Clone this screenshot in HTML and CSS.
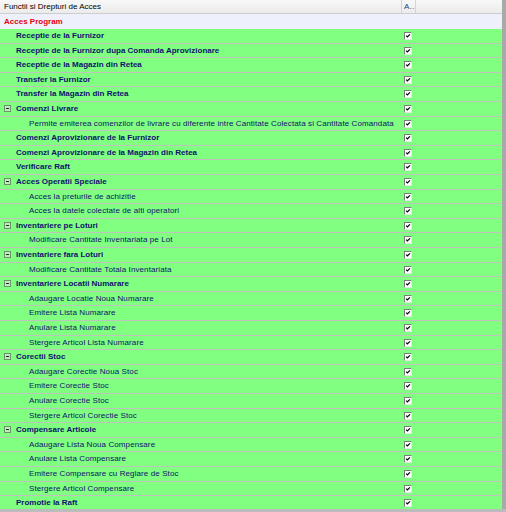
FILE: index.html
```html
<!DOCTYPE html>
<html lang="ro">
<head>
    <meta charset="UTF-8">
    <title>Functii si Drepturi de Acces</title>
    <link rel="stylesheet" href="styles.css">
</head>
<body>
    <svg class="defs" width="0" height="0">
        <symbol id="tick" viewBox="0 0 8 8">
            <path d="M1.5 3.5 L3.2 5.3 L6.6 1.8" fill="none" stroke="#000" stroke-width="1.6"/>
        </symbol>
    </svg>

    <div class="tree">
        <div class="head">
            <span class="col-name">Functii si Drepturi de Acces</span>
            <span class="col-chk">A…</span>
            <span class="col-rest"></span>
        </div>
        <div class="root">Acces Program</div>
        <div class="rows" id="rows"></div>
    </div>

    <script>
        // level: 1 = functie, 2 = drept din functie; open = grup cu copii
        const items = [
            [1, "Receptie de la Furnizor"],
            [1, "Receptie de la Furnizor dupa Comanda Aprovizionare"],
            [1, "Receptie de la Magazin din Retea"],
            [1, "Transfer la Furnizor"],
            [1, "Transfer la Magazin din Retea"],
            [1, "Comenzi Livrare", true],
            [2, "Permite emiterea comenzilor de livrare cu diferente intre Cantitate Colectata si Cantitate Comandata"],
            [1, "Comenzi Aprovizionare de la Furnizor"],
            [1, "Comenzi Aprovizionare de la Magazin din Retea"],
            [1, "Verificare Raft"],
            [1, "Acces Operatii Speciale", true],
            [2, "Acces la preturile de achizitie"],
            [2, "Acces la datele colectate de alti operatori"],
            [1, "Inventariere pe Loturi", true],
            [2, "Modificare Cantitate Inventariata pe Lot"],
            [1, "Inventariere fara Loturi", true],
            [2, "Modificare Cantitate Totala Inventariata"],
            [1, "Inventariere Locatii Numarare", true],
            [2, "Adaugare Locatie Noua Numarare"],
            [2, "Emitere Lista Numarare"],
            [2, "Anulare Lista Numarare"],
            [2, "Stergere Articol Lista Numarare"],
            [1, "Corectii Stoc", true],
            [2, "Adaugare Corectie Noua Stoc"],
            [2, "Emitere Corectie Stoc"],
            [2, "Anulare Corectie Stoc"],
            [2, "Stergere Articol Corectie Stoc"],
            [1, "Compensare Articole", true],
            [2, "Adaugare Lista Noua Compensare"],
            [2, "Anulare Lista Compensare"],
            [2, "Emitere Compensare cu Reglare de Stoc"],
            [2, "Stergere Articol Compensare"],
            [1, "Promotie la Raft"]
        ];

        document.getElementById("rows").innerHTML = items.map(([lvl, text, open]) => `
            <div class="row lvl${lvl}">
                <span class="name">${open ? '<span class="exp"></span>' : ''}${text}</span>
                <span class="chk"><svg width="8" height="8"><use href="#tick"/></svg></span>
                <span></span>
            </div>`).join("");
    </script>
</body>
</html>
```

FILE: styles.css
```css
body { margin: 0; width: 506px; height: 512px; overflow: hidden; background: #bcbcbc; font-family: "Liberation Sans", Arial, sans-serif; font-size: 8px; }
.defs { position: absolute; }
.tree { width: 502px; height: 509px; overflow: hidden; border-right: 4px solid #a9a9a9; box-shadow: inset -1px 0 #cfcfcf; }

.head { display: grid; grid-template-columns: 402px 14px 1fr; height: 13px; line-height: 13px; border-bottom: 1px solid #cdcdcd; background: linear-gradient(#f8f8f8, #ebebeb); color: #000; }
.head span { border-right: 1px solid #d3d3d3; overflow: hidden; white-space: nowrap; }
.head .col-name { padding-left: 4px; }
.head .col-chk { padding-left: 2px; color: #1b3f8a; }
.head .col-rest { border-right: 0; }

.root { height: 15px; line-height: 15px; padding-left: 4px; background: #eef0fb; color: #e4000f; font-weight: bold; }

.row { display: grid; grid-template-columns: 402px 14px 1fr; height: 14px; line-height: 14px; background: #80ff80; border-bottom: 1px solid #bfc4bf; color: #10106e; white-space: nowrap; }
.row:nth-child(5n+2), .row:nth-child(5n+4) { height: 13px; line-height: 13px; }
.row .name { position: relative; }
.lvl1 .name { padding-left: 16px; font-weight: bold; }
.lvl2 .name { padding-left: 29px; letter-spacing: 0.1px; }

.exp { position: absolute; left: 4px; top: 3px; width: 5px; height: 5px; border: 1px solid #6f8f6f; background: #b6f2b6; }
.exp::after { content: ""; position: absolute; left: 1px; top: 2px; width: 3px; height: 1px; background: #1c2c1c; }

.chk { display: flex; align-items: center; padding-left: 2px; }
.chk svg { width: 8px; height: 8px; box-sizing: border-box; border: 1px solid; border-color: #7c7c7c #e6e6e6 #e6e6e6 #7c7c7c; background: #fff; }
```
